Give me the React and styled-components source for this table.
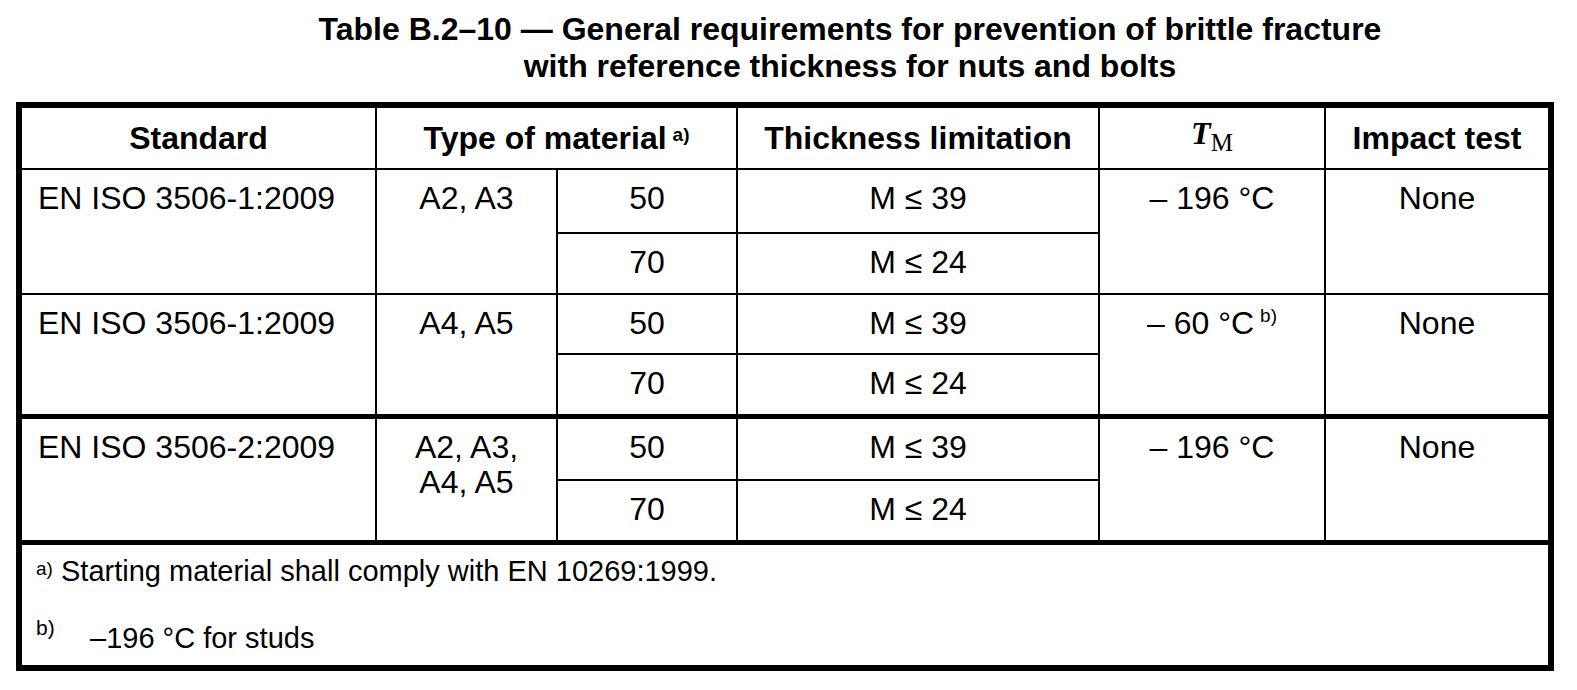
import React from "react";
import styled, { createGlobalStyle } from "styled-components";

const Page = createGlobalStyle`
  html, body {
    margin: 0;
    background: #fff;
  }
  body {
    font-family: "Liberation Sans", Arial, sans-serif;
    color: #000;
  }
`;

const Sheet = styled.div`
  width: 1538px;
  margin-left: 16px;
`;

const Title = styled.h1`
  margin: 11px 0 17px;
  padding-left: 130px;
  font-size: 32px;
  line-height: 37px;
  font-weight: bold;
  text-align: center;
`;

const Frame = styled.div`
  border: 6px solid #000;
`;

const Grid = styled.table`
  width: 100%;
  table-layout: fixed;
  border-collapse: collapse;
  border-style: hidden;
  font-size: 32px;
  line-height: 35px;
`;

const Col = styled.col`
  width: ${p => p.$w}px;
`;

const Row = styled.tr`
  height: ${p => p.$h}px;
  border-top: ${p => (p.$thick ? `${p.$thick}px solid #000` : "none")};
`;

const HeadCell = styled.th`
  border: 2px solid #000;
  padding: 0 8px;
  font-weight: bold;
  text-align: center;
  vertical-align: middle;
`;

const Cell = styled.td`
  border: 2px solid #000;
  padding: 11px ${p => (p.$left ? "8px 0 16px" : "8px")};
  text-align: ${p => (p.$left ? "left" : "center")};
  vertical-align: top;
  font-weight: normal;
`;

const NoteCell = styled.td`
  border: 2px solid #000;
  padding: 10px 14px 0;
  vertical-align: top;
  font-size: 29px;
  line-height: 33px;
`;

const Note = styled.div`
  display: flex;
  align-items: flex-start;
  & + & {
    margin-top: 34px;
  }
`;

const NoteMark = styled.span`
  font-size: ${p => p.$size}px;
  line-height: 1;
  margin-top: ${p => p.$drop}px;
  width: ${p => p.$w}px;
  flex: none;
`;

const Sup = styled.sup`
  font-size: 19px;
  line-height: 0;
  vertical-align: ${p => p.$lift}px;
  margin-left: 6px;
`;

const Sym = styled.span`
  font-family: "Liberation Serif", "Times New Roman", serif;
  font-size: 32px;
`;

const SymT = styled.i`
  font-weight: bold;
`;

const SymSub = styled.span`
  font-weight: normal;
  font-size: 25px;
  vertical-align: -7px;
`;

const groups = [
  { std: "EN ISO 3506-1:2009", mat: ["A2, A3"], tm: "– 196 °C", h: [64, 61], thick: 0 },
  { std: "EN ISO 3506-1:2009", mat: ["A4, A5"], tm: "– 60 °C", note: "b)", h: [60, 62], thick: 0 },
  { std: "EN ISO 3506-2:2009", mat: ["A2, A3,", "A4, A5"], tm: "– 196 °C", h: [64, 62], thick: 5 }
];

const Group = ({ g }) => (
  <>
    <Row $h={g.h[0]} $thick={g.thick}>
      <Cell $left rowSpan={2}>{g.std}</Cell>
      <Cell rowSpan={2}>
        {g.mat.map(m => (
          <div key={m}>{m}</div>
        ))}
      </Cell>
      <Cell>50</Cell>
      <Cell>M ≤ 39</Cell>
      <Cell rowSpan={2}>
        {g.tm}
        {g.note && <Sup $lift={12}>{g.note}</Sup>}
      </Cell>
      <Cell rowSpan={2}>None</Cell>
    </Row>
    <Row $h={g.h[1]}>
      <Cell>70</Cell>
      <Cell>M ≤ 24</Cell>
    </Row>
  </>
);

const App = () => {
  return (
    <Sheet>
      <Page />
      <Title>
        Table B.2–10 — General requirements for prevention of brittle fracture
        <br />
        with reference thickness for nuts and bolts
      </Title>
      <Frame>
        <Grid>
          <colgroup>
            <Col $w={354} />
            <Col $w={181} />
            <Col $w={180} />
            <Col $w={362} />
            <Col $w={226} />
            <Col $w={223} />
          </colgroup>
          <tbody>
            <Row $h={61}>
              <HeadCell>Standard</HeadCell>
              <HeadCell colSpan={2}>
                Type of material<Sup $lift={8}>a)</Sup>
              </HeadCell>
              <HeadCell>Thickness limitation</HeadCell>
              <HeadCell>
                <Sym>
                  <SymT>T</SymT>
                  <SymSub>M</SymSub>
                </Sym>
              </HeadCell>
              <HeadCell>Impact test</HeadCell>
            </Row>
            {groups.map((g, i) => (
              <Group g={g} key={i} />
            ))}
            <Row $h={123} $thick={5}>
              <NoteCell colSpan={6}>
                <Note>
                  <NoteMark $size={19} $drop={4} $w={25}>a)</NoteMark>
                  <span>Starting material shall comply with EN 10269:1999.</span>
                </Note>
                <Note>
                  <NoteMark $size={21} $drop={-5} $w={54}>b)</NoteMark>
                  <span>–196 °C for studs</span>
                </Note>
              </NoteCell>
            </Row>
          </tbody>
        </Grid>
      </Frame>
    </Sheet>
  );
};

export default App;
